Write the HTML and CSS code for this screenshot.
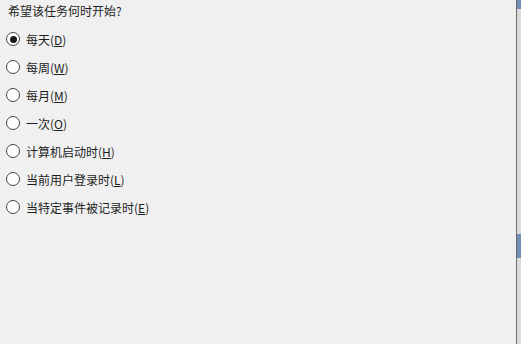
FILE: index.html
```html
<!DOCTYPE html>
<html lang="zh-CN">
<head>
<meta charset="utf-8">
<link rel="stylesheet" href="styles.css">
</head>
<body>
<div class="page">
  <div class="content">
    <div class="question">希望该任务何时开始?</div>
    <div class="options">
      <label class="opt"><span class="radio checked"></span><span class="label">每天(<u>D</u>)</span></label>
      <label class="opt"><span class="radio"></span><span class="label">每周(<u>W</u>)</span></label>
      <label class="opt"><span class="radio"></span><span class="label">每月(<u>M</u>)</span></label>
      <label class="opt"><span class="radio"></span><span class="label">一次(<u>O</u>)</span></label>
      <label class="opt"><span class="radio"></span><span class="label">计算机启动时(<u>H</u>)</span></label>
      <label class="opt"><span class="radio"></span><span class="label">当前用户登录时(<u>L</u>)</span></label>
      <label class="opt"><span class="radio"></span><span class="label">当特定事件被记录时(<u>E</u>)</span></label>
    </div>
  </div>
  <div class="edge">
    <div class="edge-line"></div>
    <div class="edge-strip">
      <div class="blue top"></div>
      <div class="blue mid"></div>
    </div>
  </div>
</div>
</body>
</html>
```
FILE: styles.css
```css
html, body {
  margin: 0;
  padding: 0;
  background: #f0f0f0;
}
.page {
  width: 521px;
  height: 344px;
  display: flex;
  font-family: "Noto Sans CJK SC", "Noto Sans", sans-serif;
  font-size: 12px;
  color: #1e1e1e;
}
.content {
  flex: 1;
  padding: 2px 0 0 8px;
}
.question {
  height: 17px;
  line-height: 17px;
}
.options {
  display: flex;
  flex-direction: column;
  margin-top: 6px;
  margin-left: -2px;
}
.opt {
  display: flex;
  align-items: center;
  height: 28px;
}
.radio {
  width: 12px;
  height: 12px;
  border: 1px solid #444;
  border-radius: 50%;
  background: #fff;
  box-sizing: content-box;
  display: flex;
  align-items: center;
  justify-content: center;
  margin-right: 6px;
}
.radio.checked::after {
  content: "";
  width: 7px;
  height: 7px;
  border-radius: 50%;
  background: #1a1a1a;
}
.label {
  line-height: 17px;
}
.label u {
  text-decoration-thickness: 1px;
  text-underline-offset: 1px;
}
.edge {
  width: 5px;
  display: flex;
}
.edge-line {
  width: 1px;
  background: #6b6b6b;
}
.edge-strip {
  flex: 1;
  background: #dcdcdc;
  position: relative;
}
.blue {
  position: absolute;
  left: 0;
  right: 0;
  background: #6f8fb4;
}
.blue.top { top: 0; height: 9px; }
.blue.mid { top: 234px; height: 24px; }
```
